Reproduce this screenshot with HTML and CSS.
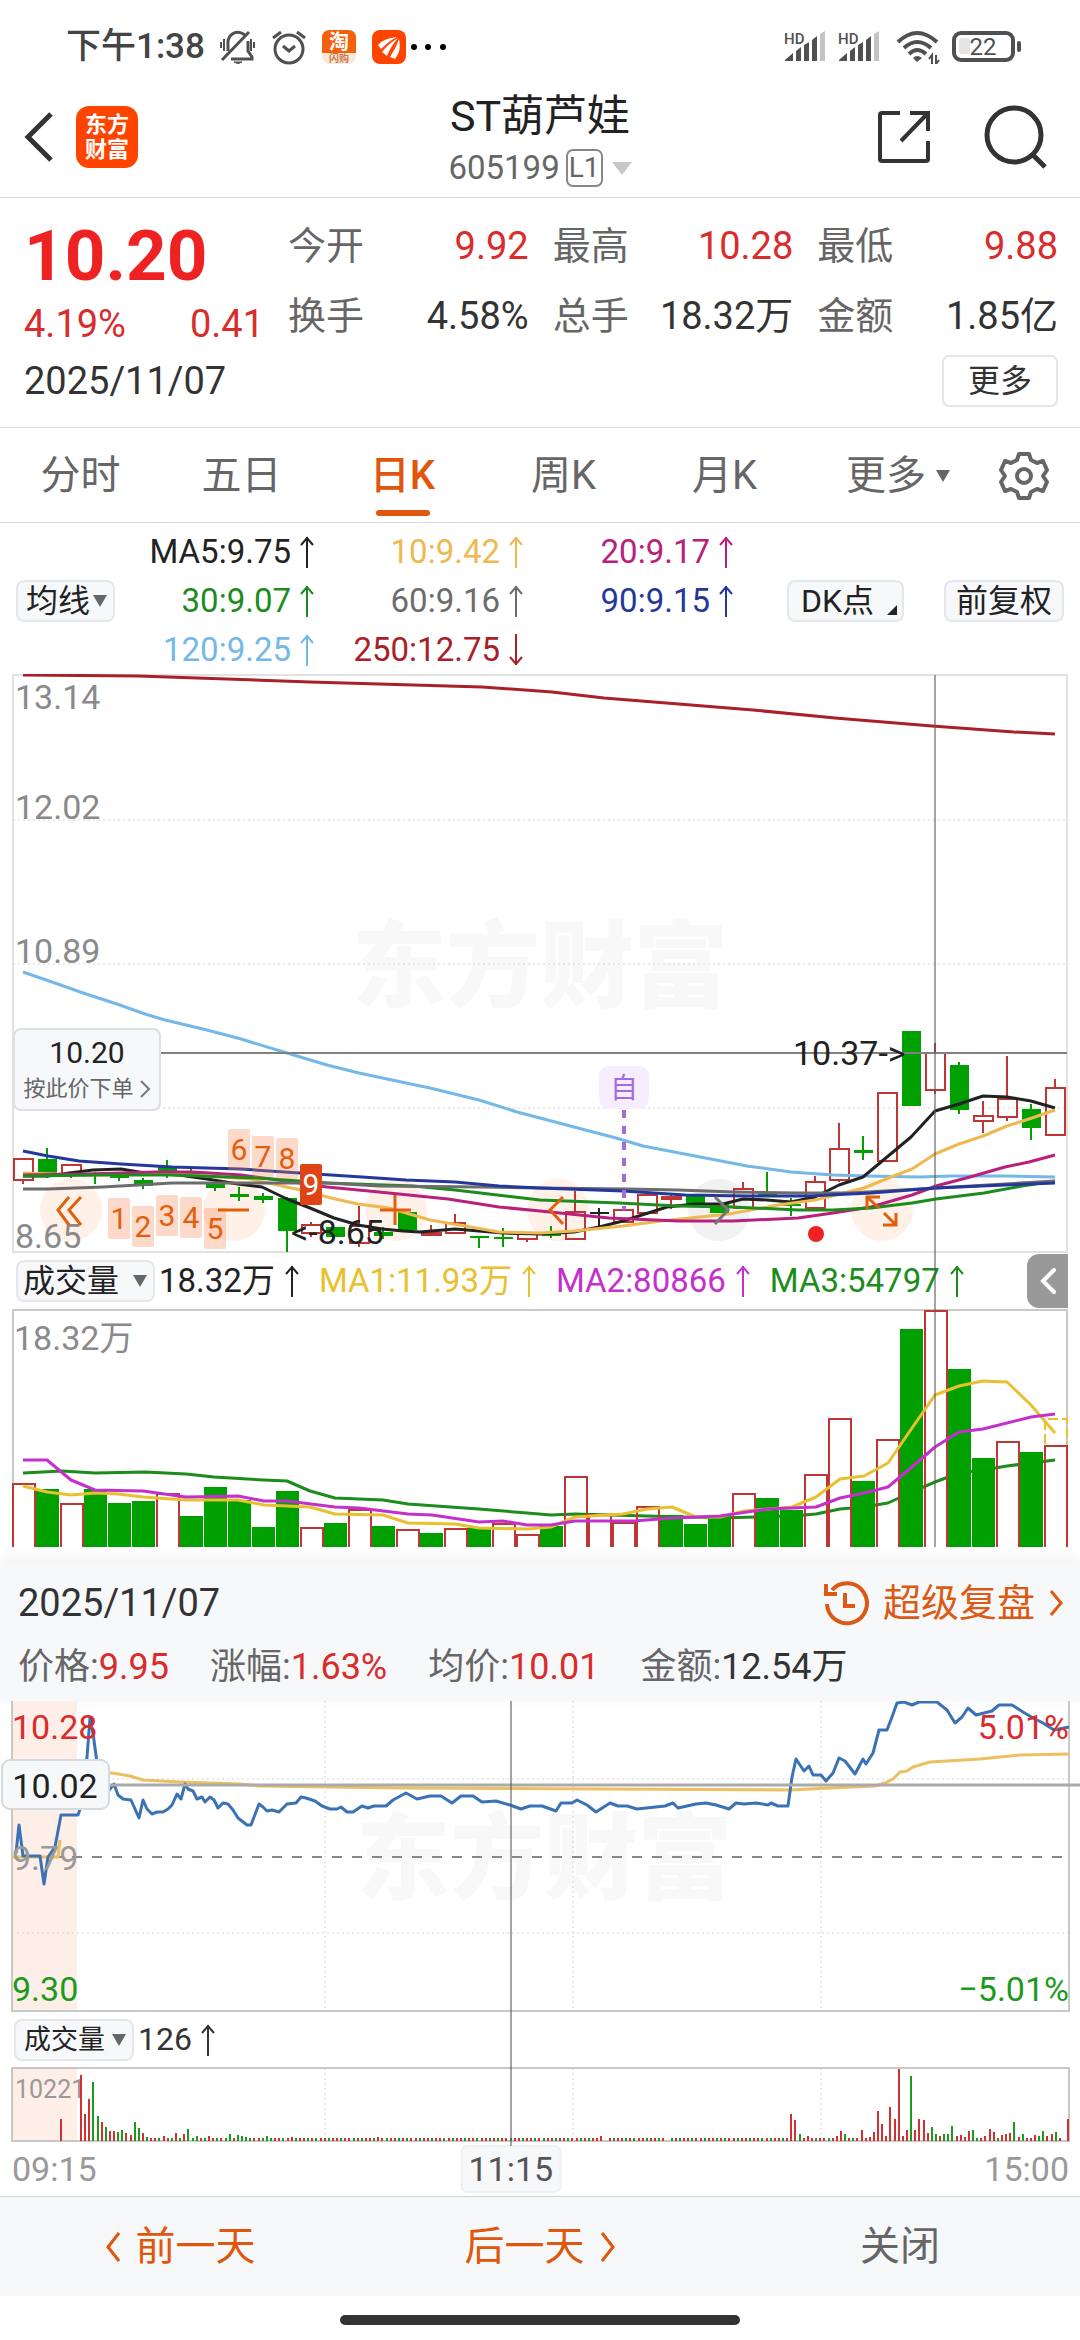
FILE: index.html
```html
<!DOCTYPE html>
<html lang="zh-CN">
  <head>
    <meta charset="UTF-8" />
    <meta name="viewport" content="width=device-width, initial-scale=1.0" />
    <title>ST葫芦娃 605199</title>
    <link rel="stylesheet" href="styles.css">
  </head>
  <body>
    <svg class="defs" width="0" height="0" aria-hidden="true">
      <symbol id="up" viewBox="0 0 14 32"><path d="M7 1V32M1 9L7 2L13 9" fill="none" stroke="currentColor" stroke-width="2"/></symbol>
      <symbol id="down" viewBox="0 0 14 32"><path d="M7 0V31M1 23L7 30L13 23" fill="none" stroke="currentColor" stroke-width="2"/></symbol>
      <symbol id="signal" viewBox="0 0 42 34">
        <path d="M1 31V30L9 23V31zM12 31V21L17 17V31zM20 31V15L25 12V31zM28 31V10L33 6V31z" fill="#505050"/>
        <path d="M36 31V4L41 1V31z" fill="#c4c4c4"/>
      </symbol>
    </svg>

    <!-- status bar -->
    <div class="status">
      <span class="time">下午1:38</span>
      <svg class="ic-bell" width="36" height="36" viewBox="0 0 36 36" fill="none" stroke="#505050" stroke-width="3">
        <path d="M25 6C15 -1 7 7 8 16V22M28 12V22L32 28V30H11M2 31L29 3"/>
        <path d="M14 33H22Q18 36 14 33z" fill="#505050" stroke-width="1"/>
        <path d="M1 13V19M4 10V22M34 13V19M31 10V22" stroke-width="2"/>
      </svg>
      <svg class="ic-alarm" width="36" height="36" viewBox="0 0 36 36" fill="none" stroke="#505050" stroke-width="3">
        <circle cx="18" cy="20" r="14"/>
        <path d="M12 17L18 22L24 17M2 9L10 3M34 9L26 3"/>
      </svg>
      <svg class="ic-app" width="34" height="34" viewBox="0 0 34 34">
        <rect width="34" height="34" rx="8" fill="#fbe6d8"/>
        <path d="M0 23V8Q0 0 8 0H26Q34 0 34 8V23z" fill="#f4600c"/>
        <text x="17" y="19" font-size="20" font-weight="700" fill="#fff" text-anchor="middle">淘</text>
        <text x="17" y="32" font-size="10" font-weight="700" fill="#c87a4a" text-anchor="middle">闪购</text>
      </svg>
      <svg class="ic-app" width="34" height="34" viewBox="0 0 34 34">
        <rect width="34" height="34" rx="8" fill="#ff4400"/>
        <path d="M6 15Q12 8 25 7Q17 11 9 19zM10 22Q16 14 26 8Q19 16 15 26zM18 27Q24 18 27 9Q30 20 23 29z" fill="#fff"/>
      </svg>
      <svg width="40" height="10" viewBox="0 0 40 10"><circle cx="5" cy="5" r="3"/><circle cx="19" cy="5" r="3"/><circle cx="34" cy="5" r="3"/></svg>
      <div class="status-right">
        <svg width="42" height="34" viewBox="0 0 42 34"><use href="#signal"/><text class="hd" x="0" y="14">HD</text></svg>
        <svg width="42" height="34" viewBox="0 0 42 34"><use href="#signal"/><text class="hd" x="0" y="14">HD</text></svg>
        <svg class="ic-wifi" width="44" height="34" viewBox="0 0 44 34" fill="none" stroke="#505050" stroke-width="4">
          <path d="M2 12Q21 -6 41 12M8 18Q21 6 35 18M13 24Q21 16 30 24"/>
          <path d="M17 28Q21 24 26 28L21 32z" fill="#505050" stroke="none"/>
          <path d="M36 34V25L33 29M40 25V34L43 30" stroke-width="2"/>
        </svg>
        <svg width="70" height="32" viewBox="0 0 70 32">
          <rect x="2" y="2" width="59" height="27" rx="7" fill="none" stroke="#505050" stroke-width="4"/>
          <rect x="7" y="7" width="11" height="16" rx="3" fill="#e4e4e4"/>
          <rect x="65" y="10" width="4" height="11" rx="2" fill="#505050"/>
          <text x="31" y="24" font-size="24" fill="#505050" text-anchor="middle">22</text>
        </svg>
      </div>
    </div>

    <header class="header">
      <div class="header-left">
        <button class="icon-btn" aria-label="返回">
          <svg width="30" height="52" viewBox="0 0 30 52"><path d="M27 3L4 26L27 49" fill="none" stroke="#333" stroke-width="5"/></svg>
        </button>
        <a class="logo" href="#">东方<br>财富</a>
      </div>
      <div class="title">
        <h1>ST葫芦娃</h1>
        <p>605199<span class="level">L1</span><i class="tri light"></i></p>
      </div>
      <div class="header-right">
        <button class="icon-btn" aria-label="分享">
          <svg width="52" height="54" viewBox="0 0 52 54" fill="none" stroke="#333" stroke-width="4">
            <path d="M22 3H4Q2 3 2 5V49Q2 51 4 51H48Q50 51 50 49V31M32 3H50V21M50 3L23 31"/>
          </svg>
        </button>
        <button class="icon-btn" aria-label="搜索">
          <svg width="64" height="64" viewBox="0 0 64 64" fill="none" stroke="#333" stroke-width="5">
            <circle cx="30" cy="30" r="27"/><path d="M49 50L61 62"/>
          </svg>
        </button>
      </div>
    </header>

    <section class="quote">
      <div class="quote-top">
        <div class="price">
          <strong>10.20</strong>
          <div class="change"><span>4.19%</span><span>0.41</span></div>
        </div>
        <dl class="stats">
          <div><dt>今开</dt><dd class="red">9.92</dd></div>
          <div><dt>最高</dt><dd class="red">10.28</dd></div>
          <div><dt>最低</dt><dd class="red">9.88</dd></div>
          <div><dt>换手</dt><dd>4.58%</dd></div>
          <div><dt>总手</dt><dd>18.32万</dd></div>
          <div><dt>金额</dt><dd>1.85亿</dd></div>
        </dl>
      </div>
      <div class="quote-bottom">
        <span>2025/11/07</span>
        <button class="more">更多</button>
      </div>
    </section>

    <nav class="tabs">
      <button>分时</button>
      <button>五日</button>
      <button class="active">日K</button>
      <button>周K</button>
      <button>月K</button>
      <button class="wide">更多<i class="tri small"></i></button>
      <button class="gear" aria-label="设置">
        <svg width="50" height="50" viewBox="0 0 50 50" fill="none" stroke="#666" stroke-width="4" stroke-linejoin="round">
          <path d="M20 3H30L32 9L38 12L44 10L48 19L44 25L48 31L44 40L38 38L32 41L30 47H20L18 41L12 38L6 40L2 31L6 25L2 19L6 10L12 12L18 9z"/>
          <circle cx="25" cy="25" r="7"/>
        </svg>
      </button>
    </nav>

    <section class="averages">
      <label class="pick pick-ma"><select aria-label="指标"><option>均线</option></select><i class="tri"></i></label>
      <ul class="ma-list">
        <li class="ma5">MA5:9.75<svg><use href="#up"/></svg></li>
        <li class="ma10">10:9.42<svg><use href="#up"/></svg></li>
        <li class="ma20">20:9.17<svg><use href="#up"/></svg></li>
        <li class="ma30">30:9.07<svg><use href="#up"/></svg></li>
        <li class="ma60">60:9.16<svg><use href="#up"/></svg></li>
        <li class="ma90">90:9.15<svg><use href="#up"/></svg></li>
        <li class="ma120">120:9.25<svg><use href="#up"/></svg></li>
        <li class="ma250">250:12.75<svg><use href="#down"/></svg></li>
      </ul>
      <div class="ma-buttons">
        <button class="chip dk">DK点</button>
        <button class="chip">前复权</button>
      </div>
    </section>

    <!-- daily K chart + volume -->
    <section class="kchart">
      <svg class="chart" viewBox="0 674 1080 579">
        <text class="watermark" x="540" y="1000">东方财富</text>
        <g class="grid">
          <path d="M13 820H1067M13 964H1067M13 1108H1067"/>
        </g>
        <rect class="frame" x="13" y="675" width="1054" height="577"/>
        <g fill="#fff0e8">
          <circle cx="71" cy="1210" r="31"/><circle cx="234" cy="1210" r="31"/><circle cx="396" cy="1210" r="31"/>
          <circle cx="558" cy="1210" r="31"/><circle cx="719" cy="1210" r="31" fill="#f1f1f1"/><circle cx="882" cy="1210" r="31"/>
        </g>
        <g class="axis">
          <text x="15" y="709">13.14</text>
          <text x="15" y="819">12.02</text>
          <text x="15" y="963">10.89</text>
          <text x="15" y="1248">8.65</text>
        </g>
        <g id="candles"></g>
        <g class="lines">
          <polyline class="ma250" points="23,675 138,676 310,682 482,687 552,692 604,698 753,710 835,718 932,726 1014,732 1055,734"/>
          <polyline class="ma120" points="23,972 52,982 86,994 117,1004 145,1014 165,1020 207,1030 241,1039 287,1053 327,1065 359,1073 406,1083 430,1088 479,1100 517,1112 540,1118 574,1127 616,1138 643,1146 695,1156 747,1166 791,1172 833,1175 867,1176 919,1177 953,1176 1005,1176 1055,1177"/>
          <polyline class="ma5" points="23,1176 48,1176 69,1173 93,1170 121,1169 145,1173 179,1175 207,1179 238,1184 262,1187 287,1199 310,1208 334,1218 358,1225 382,1229 403,1231 420,1232 455,1229 503,1233 540,1234 574,1232 599,1227 623,1221 667,1207 695,1204 723,1204 743,1199 767,1200 791,1202 815,1197 839,1185 863,1177 887,1157 911,1137 935,1111 959,1104 983,1096 1007,1097 1031,1101 1055,1108"/>
          <polyline class="ma10" points="23,1173 86,1175 172,1174 207,1176 251,1179 282,1186 310,1192 331,1198 358,1204 389,1208 430,1220 465,1226 499,1232 540,1233 574,1231 623,1226 661,1221 729,1214 778,1205 815,1200 836,1195 864,1188 891,1177 912,1169 935,1154 959,1144 983,1136 1007,1126 1032,1118 1055,1110"/>
          <polyline class="ma20" points="23,1175 86,1174 155,1172 193,1172 241,1175 293,1182 327,1187 379,1192 448,1199 499,1207 540,1211 609,1218 678,1221 733,1221 798,1218 833,1213 871,1207 912,1195 936,1186 970,1177 1005,1167 1029,1162 1055,1155"/>
          <polyline class="ma30" points="23,1176 103,1175 172,1175 258,1178 327,1183 413,1186 455,1190 540,1200 619,1203 678,1206 733,1207 798,1210 833,1210 871,1208 912,1203 936,1199 984,1193 1022,1186 1055,1181"/>
          <polyline class="ma60" points="23,1189 48,1189 103,1187 138,1185 172,1183 327,1183 379,1186 482,1187 540,1188 626,1189 678,1190 733,1192 798,1193 850,1193 919,1189 988,1185 1055,1181"/>
          <polyline class="ma90" points="23,1151 48,1156 79,1161 121,1164 172,1167 241,1169 300,1173 362,1177 406,1180 455,1182 499,1186 540,1188 623,1191 685,1195 747,1196 809,1196 871,1193 936,1188 1005,1185 1055,1183"/>
        </g>
        <g id="signals"></g>
        <g class="tools">
          <path d="M69 1197L58 1210L69 1225M81 1197L69 1210L81 1225"/>
          <path d="M218 1210H249M380 1210H411M395 1195V1225"/>
          <path d="M563 1197L550 1210L563 1224"/>
          <path d="M715 1197L728 1210L715 1224" stroke="#777"/>
          <path d="M867 1209V1197H880M867 1197L879 1208M896 1213V1225H883M896 1225L884 1213"/>
        </g>
        <path d="M624 1110V1210" stroke="#a46be0" stroke-width="4" stroke-dasharray="8 8"/>
        <rect x="599" y="1066" width="50" height="43" rx="9" fill="#f6eeff"/>
        <text x="624" y="1098" font-size="28" fill="#a46be0" text-anchor="middle">自</text>
        <circle cx="816" cy="1234" r="8" fill="#f02222"/>
        <path d="M160 1053H1067" stroke="#808080" stroke-width="2"/>
        <text class="mark" x="793" y="1065">10.37-&gt;</text>
        <text class="mark" x="291" y="1244">&lt;-8.65</text>
      </svg>
      <button class="order">
        <b>10.20</b>
        <span>按此价下单<svg width="12" height="20" viewBox="0 0 12 20"><path d="M2 2L10 10L2 18" fill="none" stroke="#777" stroke-width="2"/></svg></span>
      </button>

      <div class="vol-row">
        <label class="pick pick-vol"><select aria-label="副图"><option>成交量</option></select><i class="tri"></i></label>
        <span class="ma5">18.32万<svg><use href="#up"/></svg></span>
        <span class="vma1">MA1:11.93万<svg><use href="#up"/></svg></span>
        <span class="vma2">MA2:80866<svg><use href="#up"/></svg></span>
        <span class="vma3">MA3:54797<svg><use href="#up"/></svg></span>
        <button class="collapse" aria-label="展开">
          <svg width="18" height="28" viewBox="0 0 18 28"><path d="M15 3L4 14L15 25" fill="none" stroke="#fff" stroke-width="4" stroke-linecap="round"/></svg>
        </button>
      </div>

      <svg class="chart" viewBox="0 1309 1080 238">
        <path d="M13 1547V1310H1067V1547" fill="none" stroke="#c8c8c8" stroke-width="2"/>
        <text class="vol-label" x="14" y="1350">18.32万</text>
        <g class="lines">
          <polyline class="vma3" points="23,1473 62,1471 95,1473 145,1472 186,1474 214,1477 264,1480 287,1481 310,1491 335,1498 383,1500 408,1504 479,1509 527,1513 551,1515 575,1514 647,1516 720,1518 792,1516 816,1514 840,1509 864,1507 888,1503 912,1492 935,1482 959,1473 983,1470 1007,1466 1031,1463 1055,1460"/>
        </g>
        <g id="volumes"></g>
        <path d="M1045 1444V1419H1067V1444" fill="none" stroke="#e8c030" stroke-width="2" stroke-dasharray="10 4"/>
        <g class="lines">
          <polyline class="vma1" points="23,1486 47,1492 71,1495 95,1493 118,1494 143,1497 186,1500 238,1500 264,1505 310,1507 335,1514 383,1515 408,1523 455,1524 479,1528 527,1529 551,1527 575,1517 623,1514 647,1509 672,1507 696,1517 720,1517 744,1511 792,1507 816,1497 840,1479 864,1476 888,1463 912,1428 935,1395 959,1386 983,1381 1007,1382 1031,1405 1055,1433"/>
          <polyline class="vma2" points="23,1460 47,1460 71,1480 95,1490 143,1491 186,1497 238,1496 264,1501 287,1501 335,1507 359,1508 408,1514 432,1515 479,1522 503,1521 527,1525 551,1525 575,1521 634,1521 672,1518 720,1516 768,1509 816,1507 840,1498 864,1493 888,1487 912,1467 935,1447 959,1432 983,1429 1031,1417 1055,1414"/>
        </g>
      </svg>
    </section>

    <!-- intraday panel of the selected day -->
    <section class="panel-head">
      <div class="panel-title">
        <span>2025/11/07</span>
        <a href="#">
          <svg width="46" height="46" viewBox="0 0 46 46" fill="none" stroke="#dc5a14" stroke-width="4">
            <path d="M4 24A20 20 0 1 0 9 10M3 4V14H14M22 13V26H32"/>
          </svg>
          超级复盘
          <svg width="14" height="28" viewBox="0 0 14 28"><path d="M2 2L12 14L2 26" fill="none" stroke="#dc5a14" stroke-width="3"/></svg>
        </a>
      </div>
      <div class="panel-info">
        <span>价格:<b class="red">9.95</b></span>
        <span>涨幅:<b class="red">1.63%</b></span>
        <span>均价:<b class="red">10.01</b></span>
        <span>金额:<b>12.54万</b></span>
      </div>
    </section>

    <section class="mchart">
      <svg class="chart" viewBox="0 1701 1080 311">
        <rect x="12" y="1701" width="65" height="310" fill="#fdeee8"/>
        <text class="watermark" x="544" y="1892">东方财富</text>
        <g class="grid">
          <path d="M12 1779H1069M12 1933H1069M325 1701V2011M573 1701V2011M821 1701V2011"/>
        </g>
        <path d="M12 1701V2011H1069V1701" fill="none" stroke="#c8c8c8" stroke-width="2"/>
        <path d="M12 1857H1066" stroke="#888" stroke-width="2" stroke-dasharray="10 10"/>
        <g class="lines">
          <polyline class="avg" points="12,1857 58,1857 60,1840"/>
          <polyline class="avg" points="105,1773 112,1773 130,1776 143,1780 180,1782 240,1784 260,1786 400,1788 600,1789 790,1790 830,1788 875,1786 885,1783 893,1779 900,1772 907,1771 913,1767 930,1762 980,1759 1020,1755 1069,1754"/>
          <polyline class="now" points="16,1853 19,1825 23,1856 40,1856 44,1884 48,1857 55,1847 61,1815 78,1815 82,1803 87,1757 90,1718 93,1733 97,1763 103,1800 110,1789 114,1784 118,1795 123,1799 131,1800 139,1818 143,1800 147,1809 152,1814 157,1812 163,1812 168,1809 172,1805 177,1794 181,1799 185,1784 188,1789 193,1791 197,1799 202,1797 205,1802 210,1797 214,1800 218,1808 223,1803 228,1804 233,1810 238,1818 247,1825 251,1825 259,1804 263,1807 267,1811 272,1810 279,1812 287,1804 296,1803 301,1797 306,1798 315,1801 322,1806 330,1809 337,1809 341,1807 347,1812 353,1812 362,1806 368,1808 374,1806 386,1806 393,1800 406,1793 417,1799 430,1796 441,1796 452,1803 461,1796 473,1796 482,1802 496,1801 510,1805 521,1809 530,1806 542,1806 556,1811 561,1803 572,1803 577,1800 587,1805 596,1812 610,1803 618,1806 627,1806 637,1809 665,1806 673,1803 678,1808 696,1804 706,1803 716,1805 729,1809 736,1803 744,1804 756,1803 768,1805 771,1803 778,1806 788,1806 792,1777 796,1759 804,1771 809,1766 813,1775 821,1775 826,1781 833,1773 839,1758 845,1761 855,1774 863,1759 866,1764 873,1753 879,1730 887,1730 892,1717 897,1703 904,1702 912,1705 919,1702 937,1702 947,1710 955,1723 962,1717 968,1708 976,1715 992,1711 999,1705 1012,1705 1023,1712 1033,1718 1043,1723 1054,1730 1069,1727"/>
        </g>
        <path d="M105 1785H1080" stroke="#aaa" stroke-width="3"/>
        <g class="labels">
          <text class="up" x="12" y="1739">10.28</text>
          <text class="flat" x="12" y="1870">9.79</text>
          <text class="fall" x="12" y="2001">9.30</text>
          <text class="up end" x="1069" y="1739">5.01%</text>
          <text class="fall end" x="1069" y="2001">−5.01%</text>
        </g>
        <rect x="2" y="1760" width="107" height="49" rx="8" fill="#f7f8fa" stroke="#d5d9e0" stroke-width="2"/>
        <text class="mark" x="55" y="1798" text-anchor="middle">10.02</text>
      </svg>

      <div class="vol-row min-row">
        <label class="pick pick-min"><select aria-label="分时副图"><option>成交量</option></select><i class="tri"></i></label>
        <span>126<svg><use href="#up"/></svg></span>
      </div>

      <svg class="chart" viewBox="0 2067 1080 75">
        <rect x="12" y="2068" width="65" height="73" fill="#fdeee8"/>
        <g class="grid"><path d="M325 2068V2141M573 2068V2141M821 2068V2141"/></g>
        <rect x="12" y="2068" width="1057" height="73" fill="none" stroke="#c8c8c8" stroke-width="2"/>
        <text x="15" y="2098" font-size="25" fill="#999">10221</text>
        <g id="minutes"></g>
      </svg>
      <div class="times">
        <span>09:15</span>
        <span class="cursor">11:15</span>
        <span>15:00</span>
      </div>
    </section>

    <footer class="footer">
      <button><svg width="16" height="32" viewBox="0 0 16 32"><path d="M14 2L3 16L14 30" fill="none" stroke="currentColor" stroke-width="3"/></svg>前一天</button>
      <button>后一天<svg width="16" height="32" viewBox="0 0 16 32"><path d="M2 2L13 16L2 30" fill="none" stroke="currentColor" stroke-width="3"/></svg></button>
      <button class="close">关闭</button>
    </footer>
    <div class="home"></div>

    <script src="script.js"></script>
  </body>
</html>
```
FILE: styles.css
```css
* {
  box-sizing: border-box;
}

body {
  margin: 0;
  background: #fff;
  color: #333;
  font-family: Roboto, "Noto Sans CJK SC", sans-serif;
}

button {
  margin: 0;
  padding: 0;
  border: none;
  background: none;
  color: inherit;
  font: inherit;
  cursor: pointer;
}

a {
  color: inherit;
  text-decoration: none;
}

svg {
  display: block;
  flex: none;
}

.defs {
  position: absolute;
}

/* small triangle used by drop-downs */
.tri {
  border: 7px solid transparent;
  border-top: 12px solid #666;
  border-bottom: none;
}

.tri.light {
  border-width: 13px 10px 0;
  border-top-color: #c8c8c8;
}

.tri.small {
  margin-left: 10px;
}

/* status bar */
.status {
  display: flex;
  align-items: center;
  padding: 26px 58px 20px 66px;
  line-height: 42px;
}

.time {
  margin-right: 15px;
  font-size: 35px;
  font-weight: 500;
  color: #444;
}

.ic-alarm,
.ic-app {
  margin-left: 15px;
}

.ic-app + svg {
  margin-left: 3px;
}

.ic-app + .ic-app {
  margin-left: 16px;
}

.status-right {
  display: flex;
  align-items: center;
  gap: 12px;
  margin-left: auto;
}

.hd {
  fill: #505050;
  font-size: 15px;
  font-weight: 500;
}

.ic-wifi {
  margin-left: 4px;
}

/* header */
.header {
  display: grid;
  grid-template-columns: 1fr auto 1fr;
  align-items: center;
  padding: 0 24px 5px;
  border-bottom: 1px solid #d8d8d8;
}

.header-left,
.header-right {
  display: flex;
  align-items: center;
  padding-bottom: 6px;
}

.header-left {
  gap: 22px;
}

.header-right {
  justify-content: flex-end;
  gap: 54px;
  margin-right: 8px;
}

.logo {
  width: 62px;
  padding: 6px 0;
  border-radius: 13px;
  background: #ff4400;
  color: #fff;
  font-size: 22px;
  font-weight: 700;
  line-height: 25px;
  text-align: center;
}

.title h1 {
  margin: 0;
  font-size: 43px;
  font-weight: 400;
  line-height: 56px;
  text-align: center;
  color: #222;
}

.title p {
  display: flex;
  align-items: center;
  margin: 0;
  font-size: 33px;
  line-height: 48px;
  color: #666;
}

.level {
  margin: 0 9px 0 6px;
  padding: 0 1px;
  border: 2px solid #888;
  border-radius: 7px;
  font-size: 28px;
  line-height: 34px;
}

/* quote */
.quote {
  padding: 14px 22px 20px 24px;
  border-bottom: 1px solid #d8d8d8;
  font-size: 38px;
}

.quote-top {
  display: flex;
  gap: 24px;
}

.price {
  flex: 0 0 240px;
  padding-top: 4px;
  color: #d92c2c;
}

.price strong {
  display: block;
  color: #ee2222;
  font-size: 71px;
  line-height: 80px;
}

.change {
  display: flex;
  justify-content: space-between;
  line-height: 56px;
}

.stats {
  display: grid;
  flex: 1;
  grid-template-columns: repeat(3, 1fr);
  column-gap: 24px;
  margin: 0;
  line-height: 68px;
}

.stats div {
  display: flex;
  justify-content: space-between;
}

.stats dt {
  color: #666;
}

.stats dd {
  margin: 0;
}

.red,
.stats .red {
  color: #d92c2c;
}

.quote-bottom {
  display: flex;
  justify-content: space-between;
  align-items: center;
  margin-top: 3px;
}

.more {
  padding: 0 24px;
  border: 2px solid #e6e6e6;
  border-radius: 7px;
  font-size: 32px;
  line-height: 48px;
}

/* period tabs */
.tabs {
  display: flex;
  padding: 2px 24px 0 0;
  border-bottom: 1px solid #d8d8d8;
  font-size: 40px;
  line-height: 92px;
  color: #666;
}

.tabs button {
  position: relative;
  display: flex;
  flex: 161;
  justify-content: center;
  align-items: center;
}

.tabs .wide {
  flex: 186;
}

.tabs .gear {
  flex: 65;
}

.tabs .active {
  color: #e0560c;
  font-weight: 500;
}

.tabs .active::after {
  content: "";
  position: absolute;
  bottom: 6px;
  width: 54px;
  height: 6px;
  border-radius: 3px;
  background: #e0560c;
}

/* moving averages */
.averages {
  display: flex;
  align-items: center;
  padding: 4px 16px 0;
}

.pick {
  position: relative;
  display: block;
}

.pick select {
  display: block;
  width: 100%;
  padding: 0 8px;
  border: 2px solid #e4e7ec;
  border-radius: 8px;
  background: #f7f8fa;
  color: #222;
  font: inherit;
  font-size: 32px;
  line-height: 38px;
  appearance: none;
}

.pick .tri {
  position: absolute;
  top: 15px;
  right: 8px;
  pointer-events: none;
}

.pick-ma {
  width: 99px;
}

.ma-list {
  display: grid;
  grid-template-columns: 199px 209px 210px;
  margin: 0;
  padding: 0;
  list-style: none;
  font-size: 33px;
  line-height: 49px;
}

.ma-list li {
  display: flex;
  justify-content: flex-end;
  align-items: center;
  gap: 9px;
}

.ma-list svg,
.vol-row span svg {
  width: 14px;
  height: 32px;
}

.ma5 { color: #222; }
.ma10 { color: #f0b850; }
.ma20 { color: #b8207c; }
.ma30 { color: #1c8c1c; }
.ma60 { color: #6c6c6c; }
.ma90 { color: #24389c; }
.ma120 { color: #74b8e8; }
.ma250 { color: #aa2028; }
.vma1 { color: #e8c030; }
.vma2 { color: #c430cc; }
.vma3 { color: #1c8c1c; }
.avg { color: #ecc060; }
.now { color: #3a72b5; }

.ma-buttons {
  display: flex;
  gap: 40px;
  margin-left: auto;
}

.chip {
  position: relative;
  padding: 0 10px;
  border: 2px solid #e4e7ec;
  border-radius: 8px;
  background: #f7f8fa;
  color: #222;
  font-size: 32px;
  line-height: 38px;
}

.dk {
  padding: 0 28px 0 12px;
}

.dk::after {
  content: "";
  position: absolute;
  right: 5px;
  bottom: 5px;
  border-left: 10px solid transparent;
  border-bottom: 10px solid #222;
}

/* charts */
.chart {
  width: 100%;
}

.kchart,
.mchart {
  position: relative;
}

/* vertical cursor line over all charts of a section */
.kchart::after,
.mchart::after {
  content: "";
  position: absolute;
  top: 1px;
  bottom: 0;
  left: 86.5%;
  width: 2px;
  background: rgba(90, 90, 90, 0.55);
  pointer-events: none;
}

.mchart::after {
  top: 0;
  bottom: 50px;
  left: 47.2%;
}

.frame {
  fill: none;
  stroke: #e2e2e2;
  stroke-width: 2;
}

.grid path {
  fill: none;
  stroke: #d4d4d4;
  stroke-dasharray: 2 3;
}

.watermark {
  fill: #f8f8f8;
  font-size: 94px;
  font-weight: 900;
  text-anchor: middle;
}

.axis text,
.vol-label {
  fill: #8a8a8a;
  font-size: 34px;
}

.lines polyline {
  fill: none;
  stroke: currentColor;
  stroke-width: 3;
  stroke-linejoin: round;
}

.tools path {
  fill: none;
  stroke: #e0600c;
  stroke-width: 3;
}

.tools path[stroke] {
  stroke: #777;
}

.mark {
  fill: #222;
  font-size: 34px;
}

.labels text {
  font-size: 34px;
}

.labels .up { fill: #d92c2c; }
.labels .flat { fill: #999; }
.labels .fall { fill: #1c9a1c; }
.labels .end { text-anchor: end; }

.order {
  position: absolute;
  top: 354px;
  left: 13px;
  width: 148px;
  padding: 4px 0 3px;
  border: 2px solid #dcdfe4;
  border-radius: 8px;
  background: #f7f8fa;
}

.order b {
  display: block;
  color: #222;
  font-size: 30px;
  font-weight: 400;
  line-height: 38px;
}

.order span {
  display: flex;
  justify-content: center;
  align-items: center;
  gap: 5px;
  color: #666;
  font-size: 22px;
  line-height: 34px;
}

.vol-row {
  display: flex;
  align-items: center;
  padding-left: 16px;
  font-size: 33px;
  line-height: 56px;
}

.vol-row span {
  display: flex;
  align-items: center;
  gap: 10px;
  margin-right: 20px;
}

.pick-vol {
  width: 139px;
  margin-right: 4px;
  line-height: 42px;
}

.pick-vol select {
  padding: 0 5px;
}

.collapse {
  display: flex;
  justify-content: center;
  align-items: center;
  width: 41px;
  height: 54px;
  margin: 0 12px 0 auto;
  border-radius: 12px 0 0 12px;
  background: #999;
}

/* intraday panel */
.panel-head {
  margin-top: 16px;
  padding: 10px 17px 4px 18px;
  background: #f7f8fa;
  box-shadow: 0 -4px 14px rgba(0, 0, 0, 0.06);
}

.panel-title {
  display: flex;
  justify-content: space-between;
  font-size: 38px;
  line-height: 60px;
}

.panel-title a {
  display: flex;
  align-items: center;
  gap: 14px;
  color: #dc5a14;
}

.panel-info {
  display: flex;
  gap: 41px;
  margin-top: 4px;
  color: #666;
  font-size: 36px;
  line-height: 60px;
}

.panel-info b {
  color: #333;
  font-weight: 400;
}

.panel-info .red {
  color: #d92c2c;
}

.min-row {
  padding-left: 14px;
  font-size: 32px;
  line-height: 55px;
}

.min-row span {
  gap: 9px;
}

.pick-min {
  width: 120px;
  margin-right: 4px;
  line-height: 42px;
}

.pick-min select {
  font-size: 27px;
}

.times {
  position: relative;
  display: flex;
  justify-content: space-between;
  padding: 0 11px 0 12px;
  color: #999;
  font-size: 34px;
  line-height: 54px;
}

.cursor {
  position: absolute;
  top: 3px;
  left: 47.3%;
  padding: 0 6px;
  border: 2px solid #eef0f3;
  border-radius: 7px;
  background: #f7f8fa;
  color: #555;
  line-height: 44px;
  transform: translateX(-50%);
}

/* footer */
.footer {
  display: grid;
  grid-template-columns: repeat(3, 1fr);
  border-top: 1px solid #d0d4da;
  background: #f7f8fa;
  color: #e0560c;
  font-size: 40px;
  line-height: 99px;
}

.footer button {
  display: flex;
  justify-content: center;
  align-items: center;
  gap: 15px;
}

.footer .close {
  color: #666;
}

.home {
  width: 37%;
  height: 10px;
  margin: 19px auto 0;
  border-radius: 5px;
  background: #333;
}
```
FILE: script.js
```js
const SVG_NS = "http://www.w3.org/2000/svg";
const RED = "#c03634";
const GREEN = "#00a000";
const STEP = 24;

// [color, high, body top, body bottom, low]
const candles = [
  ["r", 1159, 1159, 1180, 1184], ["g", 1148, 1159, 1173, 1178], ["r", 1165, 1165, 1174, 1178],
  ["g", 1172, 1174, 1176, 1184], ["g", 1172, 1174, 1178, 1181], ["g", 1178, 1180, 1186, 1189],
  ["g", 1160, 1167, 1172, 1178], ["g", 1168, 1173, 1175, 1176], ["g", 1182, 1183, 1188, 1191],
  ["g", 1187, 1194, 1197, 1201], ["g", 1193, 1196, 1200, 1203], ["g", 1197, 1198, 1231, 1252],
  ["r", 1222, 1225, 1233, 1237], ["g", 1227, 1227, 1237, 1237], ["r", 1206, 1226, 1243, 1247],
  ["g", 1227, 1232, 1236, 1239], ["g", 1212, 1212, 1230, 1230], ["r", 1225, 1233, 1235, 1236],
  ["r", 1214, 1223, 1233, 1233], ["g", 1236, 1236, 1238, 1248], ["g", 1228, 1237, 1239, 1247],
  ["r", 1234, 1234, 1239, 1242], ["g", 1226, 1234, 1236, 1238], ["r", 1191, 1212, 1239, 1239],
  ["k", 1208, 1212, 1214, 1227], ["r", 1208, 1210, 1222, 1222], ["r", 1194, 1195, 1213, 1215],
  ["r", 1195, 1197, 1199, 1209], ["g", 1196, 1196, 1204, 1204], ["g", 1204, 1204, 1213, 1213],
  ["r", 1182, 1189, 1208, 1208], ["g", 1172, 1194, 1196, 1197], ["g", 1198, 1204, 1206, 1216],
  ["r", 1176, 1182, 1208, 1208], ["r", 1123, 1149, 1180, 1182], ["g", 1136, 1150, 1153, 1160],
  ["r", 1093, 1093, 1161, 1161], ["g", 1031, 1031, 1106, 1106], ["r", 1043, 1053, 1090, 1094],
  ["g", 1062, 1065, 1110, 1114], ["r", 1101, 1116, 1121, 1133], ["r", 1056, 1099, 1117, 1121],
  ["g", 1104, 1109, 1128, 1140], ["r", 1079, 1088, 1135, 1135]
];

// top of every volume bar
const volumes = [
  1483, 1489, 1503, 1489, 1503, 1501, 1493, 1516, 1487, 1500, 1527,
  1491, 1527, 1523, 1509, 1526, 1529, 1533, 1528, 1527, 1523, 1534,
  1526, 1476, 1514, 1522, 1506, 1515, 1524, 1516, 1493, 1498, 1510,
  1474, 1418, 1481, 1439, 1329, 1310, 1369, 1458, 1441, 1452, 1445
];
const volumeColors = "rgrgggrggggg" + "rgrgrgrgrrgrrrrgggrggrrgrgrggrgr";

// numbered signals: [x, y]
const signals = [
  [108, 1198], [132, 1206], [156, 1195], [180, 1197], [204, 1208],
  [228, 1129], [252, 1136], [276, 1138], [300, 1164]
];

// minute bars which stand out, by minute: height, negative = falling
const minuteBars = {
  0: 66, 1: 27, 2: 42, 3: -59, 4: -25, 5: 19, 6: -14, 7: 10, 8: 10, 9: -9, 10: -11, 11: 8, 12: 6,
  13: -19, 14: -13, 15: 8, 16: -4, 20: 5, 23: 8, 25: 7, 26: -12, 28: -5, 31: 5, 36: -7, 38: -6,
  39: -5, 40: -4, 45: -5, 51: 4, 72: 4, 126: 5, 127: 0, 142: 0, 172: 27, 173: 21, 174: -7, 176: 5,
  183: 5, 184: 10, 185: -7, 189: 11, 191: 4, 192: 9, 193: 30, 194: 17, 195: 5, 196: 34, 197: 22,
  198: 72, 199: 5, 200: 11, 201: -65, 202: 11, 203: 22, 204: 21, 205: 8, 206: -14, 207: -7, 208: 5,
  209: -7, 210: -7, 211: -15, 212: 5, 213: 6, 214: 4, 215: 10, 216: -11, 219: 5, 220: 12, 221: 9,
  223: 6, 224: 7, 225: 8, 226: -19, 227: 4, 228: -7, 231: 6, 232: -5, 233: -10, 234: 5, 235: 7,
  236: -9, 238: 0, 239: 22
};

function add(parent, tag, attrs, text) {
  const el = document.createElementNS(SVG_NS, tag);
  for (const key in attrs) {
    el.setAttribute(key, attrs[key]);
  }
  if (text) {
    el.textContent = text;
  }
  parent.appendChild(el);
}

function drawCandles() {
  const g = document.getElementById("candles");
  candles.forEach(([type, high, top, bottom, low], i) => {
    const x = 23 + i * STEP;
    const color = type === "r" ? RED : type === "g" ? GREEN : "#222";
    if (high < top) {
      add(g, "path", { d: `M${x} ${high}V${top}`, stroke: color, "stroke-width": 2 });
    }
    if (low > bottom) {
      add(g, "path", { d: `M${x} ${bottom}V${low}`, stroke: color, "stroke-width": 2 });
    }
    if (type === "r") {
      add(g, "rect", { x: x - 9, y: top, width: 19, height: bottom - top, fill: "none", stroke: color, "stroke-width": 2 });
    } else {
      add(g, "rect", { x: x - 9, y: top, width: 19, height: bottom - top, fill: color });
    }
  });
}

function drawVolumes() {
  const g = document.getElementById("volumes");
  volumes.forEach((top, i) => {
    const x = 12 + i * STEP;
    if (volumeColors[i] === "r") {
      add(g, "path", { d: `M${x + 1} 1547V${top + 1}H${x + 23}V1547`, fill: "none", stroke: RED, "stroke-width": 2 });
    } else {
      add(g, "rect", { x: x, y: top, width: 23, height: 1547 - top, fill: GREEN });
    }
  });
}

function drawSignals() {
  const g = document.getElementById("signals");
  signals.forEach(([x, y], i) => {
    const last = i === signals.length - 1;
    add(g, "rect", { x: x, y: y, width: 22, height: 41, rx: 2, fill: last ? "#e04416" : "rgba(248, 130, 80, 0.3)" });
    add(g, "text", { x: x + 11, y: y + 31, "font-size": 30, "text-anchor": "middle", fill: last ? "#fff" : "#e0600c" }, String(i + 1));
  });
}

function drawMinutes() {
  const g = document.getElementById("minutes");
  add(g, "rect", { x: 60, y: 2119, width: 2, height: 22, fill: "#d03030" });
  for (let i = 0; i < 240; i++) {
    const value = i in minuteBars ? minuteBars[i] : (i * 7 % 11 < 4 ? -3 : 3);
    const height = Math.abs(value);
    add(g, "rect", { x: Math.round(80 + i * 4.13), y: 2141 - height, width: 2, height: height, fill: value < 0 ? "#1c9a1c" : "#d03030" });
  }
}

drawSignals();
drawCandles();
drawVolumes();
drawMinutes();
```
